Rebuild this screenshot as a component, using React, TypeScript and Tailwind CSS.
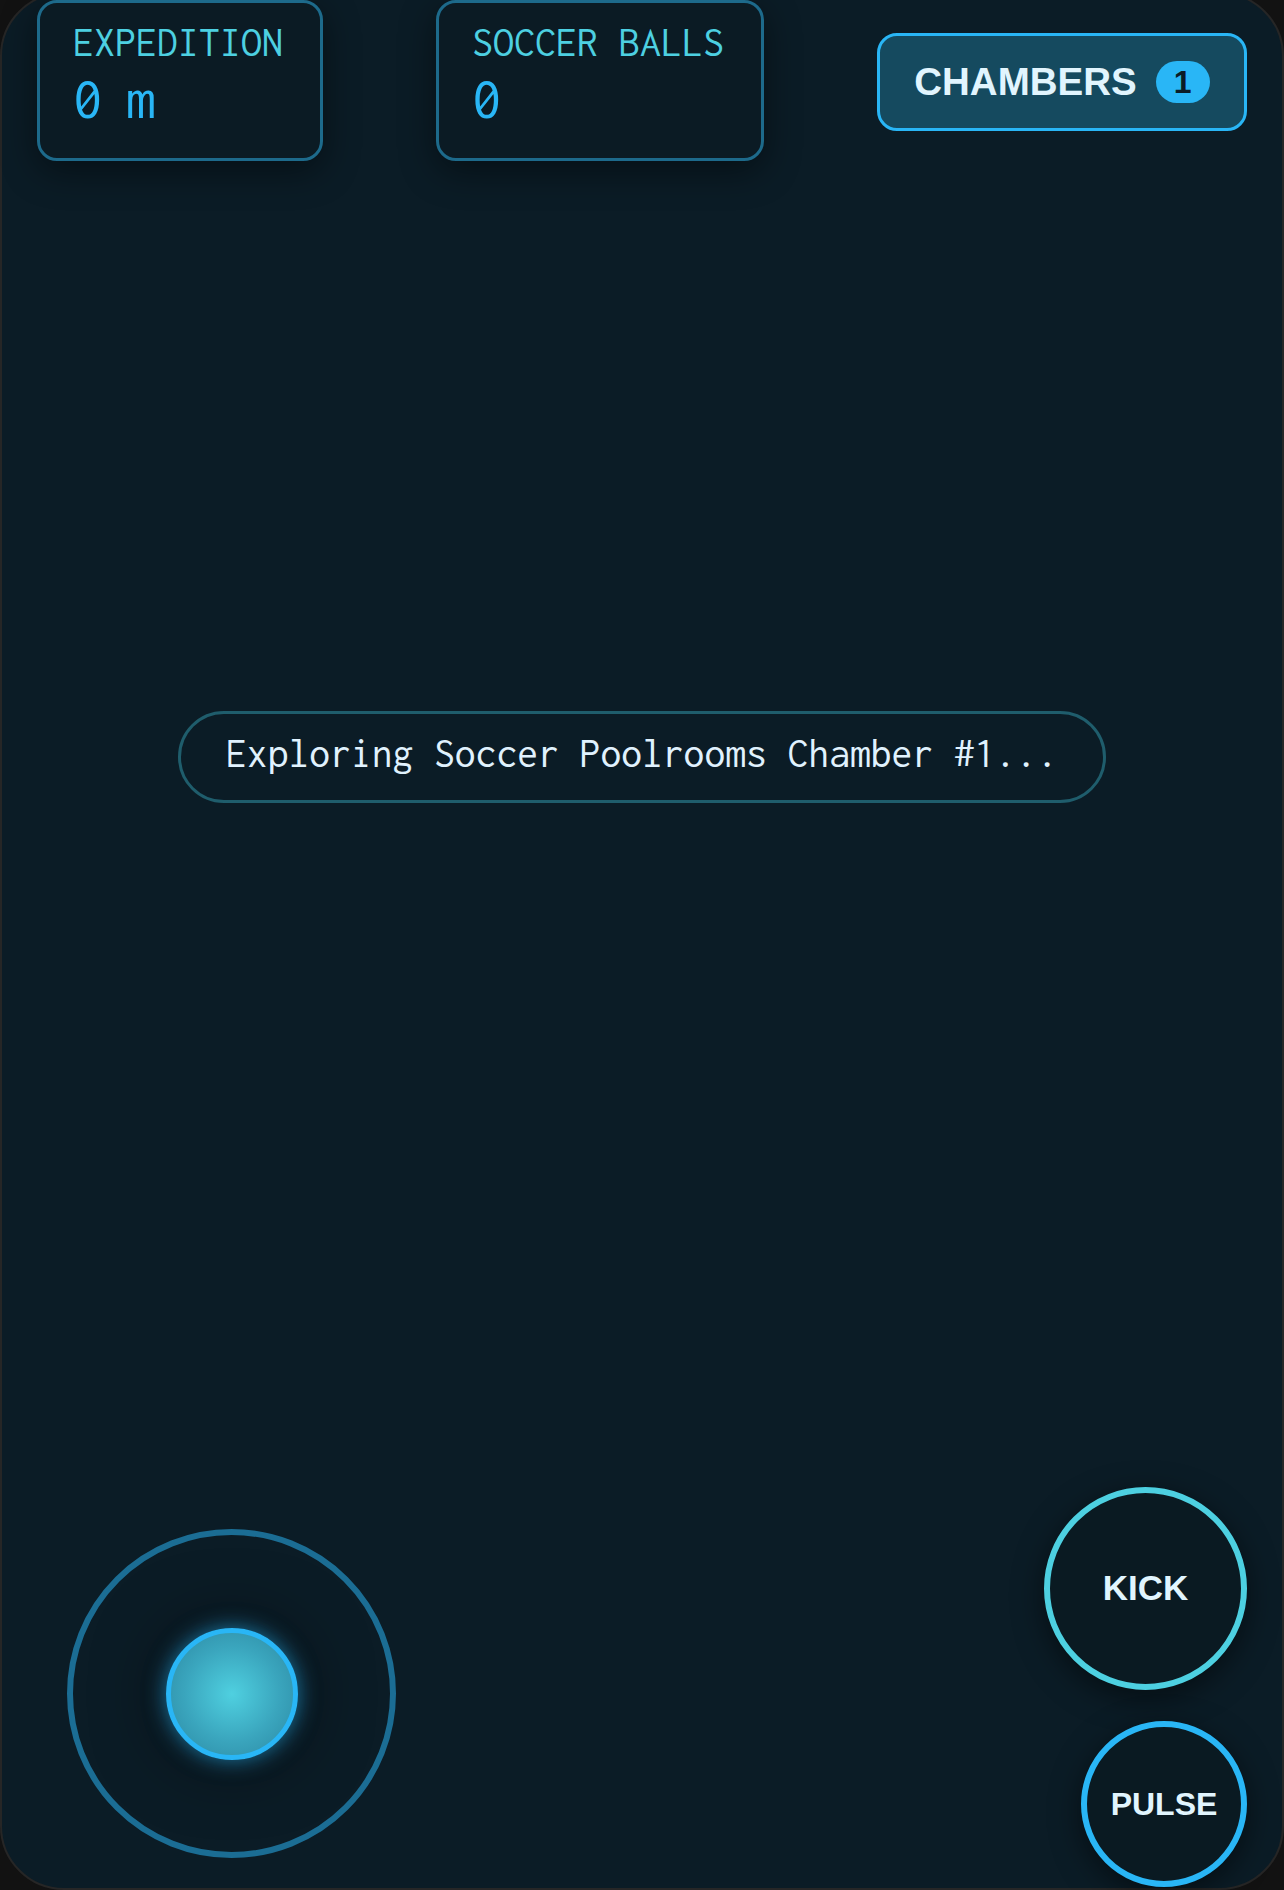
import React from "react";

const mono = "font-['Inconsolata','DejaVu_Sans_Mono',monospace]";
const sans = "font-['Liberation_Sans',Arial,sans-serif]";

function Card({ label, value, width }: { label: string; value: string; width: string }) {
  return (
    <div
      className={`${width} h-[161px] rounded-[20px] border-[3px] border-[#1d6a8b] bg-[#0b1b24] shadow-[0_10px_36px_rgba(0,0,0,0.45)] pl-[33px] pt-[17px]`}
    >
      <div className={`${mono} text-[42px] leading-[44px] text-[#4dd0e1]`}>{label}</div>
      <div className={`${mono} mt-[3px] text-[59px] leading-[62px] tracking-[-0.05em] text-[#29b6f6]`}>{value}</div>
    </div>
  );
}

export default function App() {
  return (
    <div className="h-[1890px] w-full overflow-hidden bg-[#121212]">
      <div className="-mt-2 flex h-[1898px] flex-col rounded-[64px] border-2 border-[#262626] bg-[#0b1c26] px-[35px]">
        <div className="mt-[6px] flex items-start justify-between">
          <Card label="EXPEDITION" value="0 m" width="w-[286px]" />
          <Card label="SOCCER BALLS" value="0" width="w-[328px]" />
          <button
            className={`${sans} mt-[33px] flex h-[98px] w-[370px] items-center justify-center gap-[19px] rounded-[20px] border-[3px] border-[#29b6f6] bg-[#154a5f] text-[38.5px] font-bold text-[#e1f5fe]`}
          >
            <span>CHAMBERS</span>
            <span className="flex h-[42px] w-[54px] items-center justify-center rounded-full bg-[#29b6f6] text-[32px] text-[#0b1c26]">
              1
            </span>
          </button>
        </div>

        <div className="mt-[550px] flex justify-center">
          <div
            className={`${mono} h-[92px] w-[928px] rounded-full border-[3px] border-[#1f5d6c] pt-[17px] text-center text-[41.6px] leading-[44px] text-[#e0f2fe]`}
          >
            Exploring Soccer Poolrooms Chamber #1...
          </div>
        </div>

        <div className="mt-auto flex items-end justify-between pb-[1px]">
          <div className="mb-[29px] ml-[30px] flex h-[329px] w-[329px] items-center justify-center rounded-full border-[6px] border-[#1b6d94]">
            <div className="h-[132px] w-[132px] rounded-full border-[5px] border-[#29b6f6] bg-[radial-gradient(circle,#4fd0e0_0%,#3aa5bd_55%,#2b88a2_100%)] shadow-[0_0_22px_rgba(41,182,246,0.65),0_0_70px_rgba(0,0,0,0.6)]" />
          </div>
          <div className="flex flex-col items-end gap-[31px]">
            <div
              className={`${sans} flex h-[203px] w-[203px] items-center justify-center rounded-full border-[6px] border-[#4dd0e1] bg-[#0a1a22] text-[35px] font-bold text-[#e1f5fe] shadow-[0_8px_30px_rgba(0,0,0,0.5)]`}
            >
              KICK
            </div>
            <div
              className={`${sans} flex h-[166px] w-[166px] items-center justify-center rounded-full border-[6px] border-[#29b6f6] bg-[#0a1a22] text-[32px] font-bold text-[#e1f5fe] shadow-[0_8px_30px_rgba(0,0,0,0.5)]`}
            >
              PULSE
            </div>
          </div>
        </div>
      </div>
    </div>
  );
}
